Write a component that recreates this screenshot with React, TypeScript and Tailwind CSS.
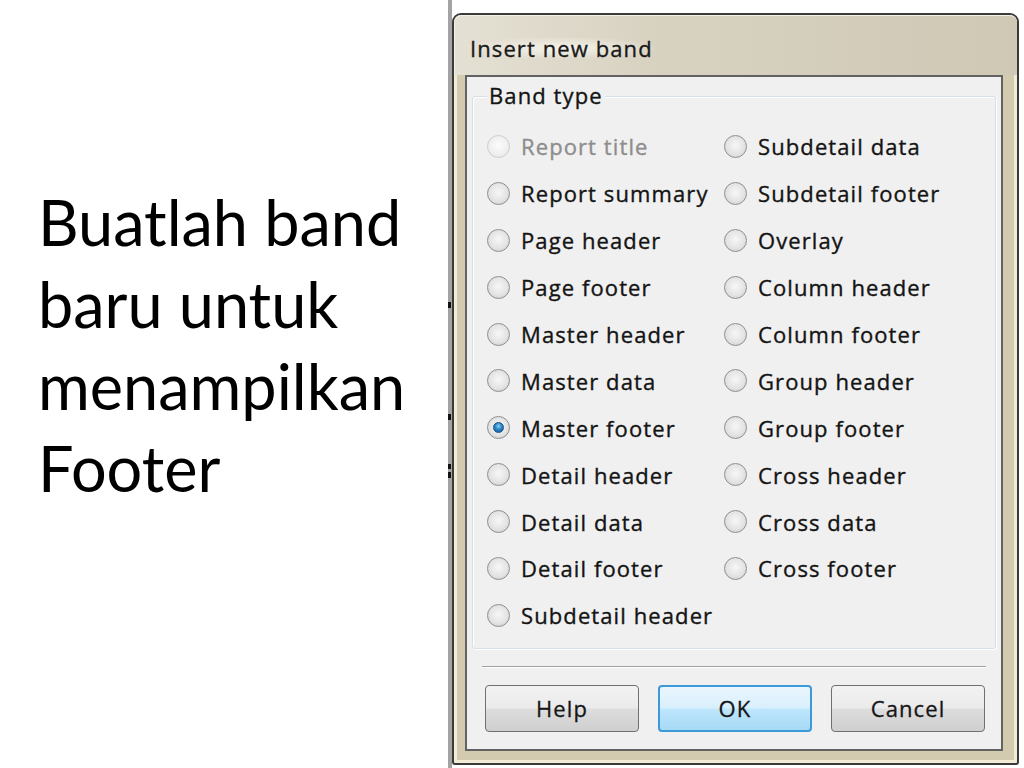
import React from "react";

const left = [
  "Report title",
  "Report summary",
  "Page header",
  "Page footer",
  "Master header",
  "Master data",
  "Master footer",
  "Detail header",
  "Detail data",
  "Detail footer",
  "Subdetail header",
];
const right = [
  "Subdetail data",
  "Subdetail footer",
  "Overlay",
  "Column header",
  "Column footer",
  "Group header",
  "Group footer",
  "Cross header",
  "Cross data",
  "Cross footer",
];

function Radio({ label, checked, disabled }: { label: string; checked?: boolean; disabled?: boolean }) {
  return (
    <div className="flex items-center h-[46.9px]">
      <div
        className={
          "relative w-[23px] h-[23px] rounded-full border flex items-center justify-center shrink-0 " +
          (disabled
            ? "border-[#cdcdcd] bg-[radial-gradient(circle_at_50%_45%,#fbfbfb_0%,#f0f0f0_55%,#e2e2e2_100%)]"
            : "border-[#8f8f8f] bg-[radial-gradient(circle_at_50%_45%,#f7f7f7_0%,#e4e4e4_55%,#c9c9c9_100%)]")
        }
      >
        {checked && (
          <div className="w-[11px] h-[11px] rounded-full bg-[radial-gradient(circle_at_50%_35%,#8fd0f5_0%,#2a86c9_45%,#0d4f8f_100%)] border border-[#1d4f7d]" />
        )}
      </div>
      <span
        className={
          "ml-[11px] text-[22px] leading-none tracking-[1.1px] [-webkit-text-stroke:0.35px] " +
          (disabled ? "text-[#8d8d8d]" : "text-[#141414]")
        }
      >
        {label}
      </span>
    </div>
  );
}

function Btn({ label, primary }: { label: string; primary?: boolean }) {
  return (
    <div
      className={
        "w-[154px] h-[47px] rounded-[4px] flex items-center justify-center text-[22px] tracking-[1.1px] [-webkit-text-stroke:0.3px] text-[#151515] " +
        (primary
          ? "border-2 border-[#3d9ad8] bg-[linear-gradient(to_bottom,#eaf6fd_0%,#d9effc_48%,#bee6fd_52%,#a7d9f5_100%)]"
          : "border border-[#707070] bg-[linear-gradient(to_bottom,#f2f2f2_0%,#ebebeb_48%,#dddddd_52%,#cfcfcf_100%)]")
      }
    >
      {label}
    </div>
  );
}

export default function App() {
  return (
    <div
      className="w-[1024px] h-[768px] bg-white flex overflow-hidden"
      style={{ fontFamily: '"Open Sans", "Noto Sans", sans-serif' }}
    >
      <div
        className="w-[448px] shrink-0 pl-[38px] pt-[181px] text-[63px] leading-[82px] text-black"
        style={{ fontFamily: 'Lato, "Open Sans", sans-serif' }}
      >
        <div>Buatlah band</div>
        <div>baru untuk</div>
        <div>menampilkan</div>
        <div>Footer</div>
      </div>
      <div className="w-[4px] h-[768px] bg-[#a3a3a3] shrink-0 flex flex-col">
        <div className="mt-[302px] h-[6px] w-[3px] bg-[#111]" />
        <div className="mt-[106px] h-[6px] w-[3px] bg-[#111]" />
        <div className="mt-[44px] h-[5px] w-[3px] bg-[#111]" />
        <div className="mt-[3px] h-[6px] w-[3px] bg-[#111]" />
      </div>
      <div className="mt-[13px] w-[567px] h-[752px] shrink-0 rounded-t-[9px] rounded-b-[3px] border-2 border-[#3a3a3a] bg-[#d3cbb0] flex flex-col">
        <div className="h-[60px] shrink-0 rounded-t-[7px] border-t border-l border-[#f3efe4] bg-[linear-gradient(to_right,#e4e0d3_0%,#d8d2c1_35%,#cfc8b5_100%)] flex items-start pl-[13px] pt-[21px]">
          <span className="text-[22px] leading-none text-[#1a1a1a] tracking-[1.1px] [-webkit-text-stroke:0.35px] px-[2px] rounded bg-[radial-gradient(ellipse_at_center,rgba(250,248,240,0.85)_0%,rgba(250,248,240,0)_75%)]">
            Insert new band
          </span>
        </div>
        <div className="flex-1 flex pl-[8px] pr-[11px] pb-[9px] border-l-[3px] border-r-[3px] border-b-[3px] border-[#f1ebd8] rounded-b-[2px]">
          <div className="flex-1 border-2 border-[#626262] bg-[#f0f0f0] flex flex-col">
            <div className="relative mx-[5px] mt-[19px] h-[553px] border border-[#d5dfe5] rounded-[3px] shadow-[inset_1px_1px_0_#ffffff,1px_1px_0_#ffffff]">
              <span className="absolute left-[14px] top-[-13px] bg-[#f0f0f0] px-[2px] text-[22px] leading-none text-[#141414] tracking-[1.1px] [-webkit-text-stroke:0.35px]">
                Band type
              </span>
              <div className="flex pl-[14px] pt-[26px]">
                <div className="w-[237px] flex flex-col">
                  {left.map((l, i) => (
                    <Radio key={l} label={l} disabled={i === 0} checked={l === "Master footer"} />
                  ))}
                </div>
                <div className="flex flex-col">
                  {right.map((l) => (
                    <Radio key={l} label={l} />
                  ))}
                </div>
              </div>
            </div>
            <div className="mx-[15px] mt-[17px] h-[2px] border-t border-[#a0a0a0] border-b border-b-white" />
            <div className="flex gap-[19px] pl-[18px] mt-[17px]">
              <Btn label="Help" />
              <Btn label="OK" primary />
              <Btn label="Cancel" />
            </div>
          </div>
        </div>
      </div>
    </div>
  );
}
